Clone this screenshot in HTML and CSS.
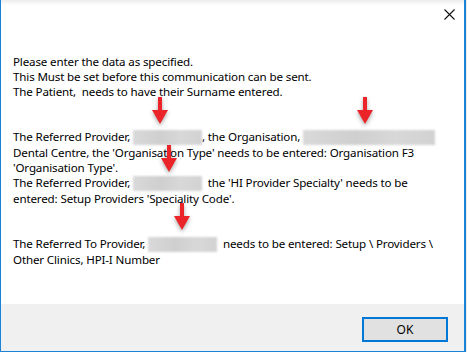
FILE: index.html
```html
<!DOCTYPE html>
<html lang="en">

<head>
    <meta charset="utf-8">
    <title>Message</title>
    <link rel="stylesheet" href="styles.css">
</head>

<body>
    <div class="dialog">
        <div class="title-bar">
            <button class="close-btn" aria-label="Close">
                <svg width="11" height="11" viewBox="0 0 11 11">
                    <path d="M0.5 0.5 L10.5 10.5 M10.5 0.5 L0.5 10.5" stroke="#111" stroke-width="1.1" fill="none"/>
                </svg>
            </button>
        </div>

        <div class="content">
            <p class="msg">
                Please enter the data as specified.<br>
                This Must be set before this communication can be sent.<br>
                The Patient,&nbsp; needs to have their Surname entered.<br>
                <br>
                <br>
                The Referred Provider, <span class="redact r-name"></span>, the Organisation, <span class="redact r-org"></span><br>
                Dental Centre, the 'Organisation Type' needs to be entered: Organisation F3<br>
                'Organisation Type'.<br>
                The Referred Provider, <span class="redact r-name"></span>&nbsp; the 'HI Provider Specialty' needs to be<br>
                entered: Setup Providers 'Speciality Code'.<br>
                <br>
                <br>
                The Referred To Provider, <span class="redact r-name"></span>&nbsp; needs to be entered: Setup \ Providers \<br>
                Other Clinics, HPI-I Number
            </p>

            <!-- annotation arrows drawn over the message -->
            <div class="arrow a1"></div>
            <div class="arrow a2"></div>
            <div class="arrow a3"></div>
            <div class="arrow a4"></div>
        </div>

        <div class="footer">
            <button class="ok-btn">OK</button>
        </div>
    </div>
</body>

</html>
```

FILE: styles.css
```css
html {
    box-sizing: border-box;
}

body {
    margin: 0px;
    width: 467px;
    height: 352px;
    background-color: #e9e9e9;
    font-family: 'Noto Sans', 'Open Sans', sans-serif;
    font-size: 11.6px;
    letter-spacing: -0.15px;
    color: #000;
    overflow: hidden;
}

.dialog {
    width: 466px;
    height: 352px;
    box-sizing: border-box;
    border: 1px solid #1883d7;
    border-top: none;
    border-right-width: 2px;
    background-color: #fff;
    display: flex;
    flex-direction: column;
}

.title-bar {
    height: 28px;
    display: flex;
    justify-content: flex-end;
    align-items: flex-start;
    background: linear-gradient(#ececec, #fff 5px);
}

.close-btn {
    border: none;
    background: none;
    padding: 0px;
    width: 30px;
    height: 28px;
    margin-right: 0px;
    display: flex;
    justify-content: center;
    align-items: center;
}

.content {
    flex: 1;
    position: relative;
    padding: 26px 0px 0px 12px;
}

.msg {
    margin: 0px;
    line-height: 15px;
    white-space: nowrap;
}

.redact {
    display: inline-block;
    height: 15px;
    vertical-align: -4px;
    background: linear-gradient(90deg, #d9d9d9, #cfcfcf 40%, #d8d8d8 70%, #d2d2d2);
    filter: blur(1px);
}

.r-name {
    width: 69px;
}

.r-org {
    width: 132px;
}

.arrow {
    position: absolute;
    width: 16px;
    height: 27px;
    filter: drop-shadow(0px 2px 2px rgba(0, 0, 0, 0.35));
}

.arrow::before {
    content: "";
    position: absolute;
    left: 6px;
    top: 0px;
    width: 4px;
    height: 15px;
    background-color: #ea2428;
}

.arrow::after {
    content: "";
    position: absolute;
    left: 0px;
    top: 13px;
    border-left: 8px solid transparent;
    border-right: 8px solid transparent;
    border-top: 14px solid #ea2428;
}

.a1 {
    left: 151px;
    top: 69px;
}

.a2 {
    left: 356px;
    top: 69px;
}

.a3 {
    left: 160px;
    top: 117px;
}

.a4 {
    left: 173px;
    top: 175px;
}

.footer {
    height: 47px;
    background-color: #f0f0f0;
    display: flex;
    justify-content: flex-end;
    align-items: flex-start;
    padding: 13px 16px 0px 0px;
    box-sizing: border-box;
}

.ok-btn {
    width: 86px;
    height: 25px;
    box-sizing: border-box;
    border: 2px solid #0078d7;
    background-color: #e1e1e1;
    font-family: 'Noto Sans', 'Open Sans', sans-serif;
    font-size: 12px;
    color: #000;
    padding: 0px;
}
```
